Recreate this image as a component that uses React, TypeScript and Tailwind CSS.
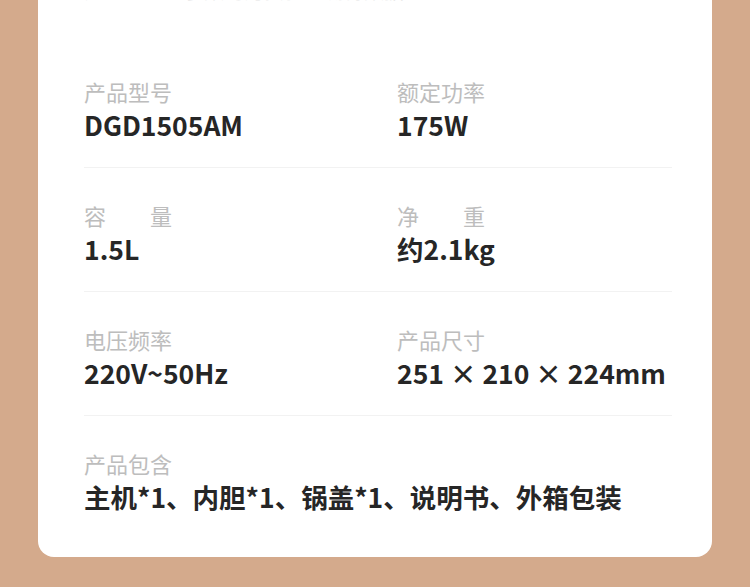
const specs: [string, string][] = [
  ["产品型号", "DGD1505AM"],
  ["额定功率", "175W"],
  ["容\u3000\u3000量", "1.5L"],
  ["净\u3000\u3000重", "约2.1kg"],
  ["电压频率", "220V~50Hz"],
  ["产品尺寸", "251 × 210 × 224mm"],
];

function Item({ label, value }: { label: string; value: string }) {
  return (
    <div>
      <div className="text-[22px] leading-[24px] text-[#bdbdbd]">{label}</div>
      <div className="mt-[7px] text-[26.5px] leading-[30px] font-bold text-[#262626]">{value}</div>
    </div>
  );
}

export default function App() {
  const rows = [specs.slice(0, 2), specs.slice(2, 4), specs.slice(4, 6)];

  return (
    <div
      className="h-[587px] w-[750px] overflow-hidden bg-[#d4aa8c]"
      style={{ fontFamily: '"Noto Sans CJK SC", "Noto Sans", sans-serif' }}
    >
      <div className="mx-[38px] rounded-b-2xl bg-white pl-[46px] pr-[40px]">
        {/* bottom edge of the section above, cut off by the viewport */}
        <div className="h-[44px] overflow-hidden">
          <div className="-mt-[21px] text-[20px] leading-[24px] text-[#e4e4e4]">
            注　　以上参数均为实验室测得数据
          </div>
        </div>

        {rows.map((row, i) => (
          <div
            key={i}
            className="grid grid-cols-[313px_1fr] border-b border-[#f2f2f2] pt-[35px] pb-[27px]"
          >
            {row.map(([label, value]) => (
              <Item key={label} label={label} value={value} />
            ))}
          </div>
        ))}

        <div className="pt-[35px] pb-[45px]">
          <Item label="产品包含" value="主机*1、内胆*1、锅盖*1、说明书、外箱包装" />
        </div>
      </div>
    </div>
  );
}
